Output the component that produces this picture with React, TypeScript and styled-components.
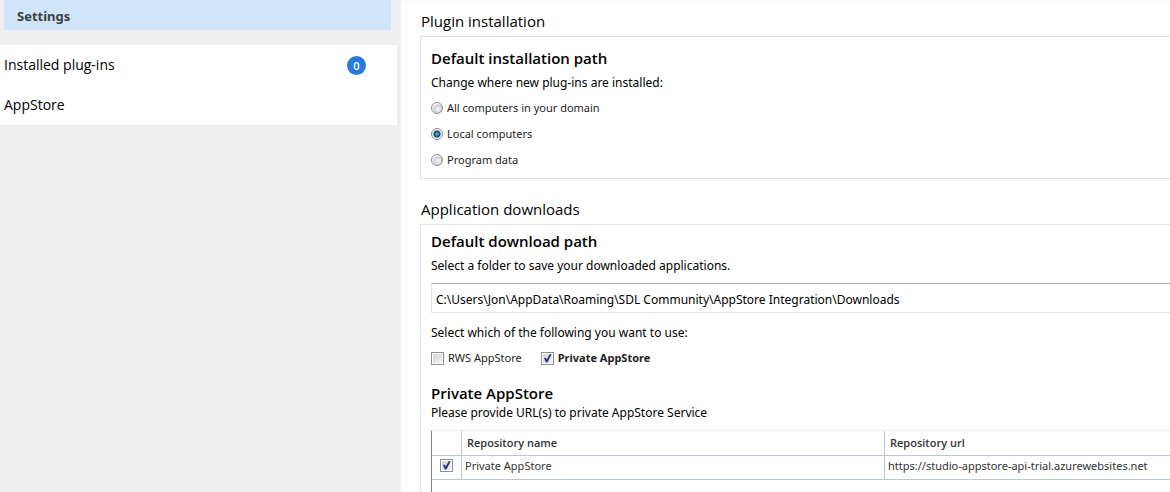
import React, { useId, useState } from "react";
import styled, { createGlobalStyle, css } from "styled-components";

const GlobalStyle = createGlobalStyle`
  * { box-sizing: border-box; }
  body {
    margin: 0;
    background: #fff;
    color: #000;
    font-family: "Noto Sans", "Open Sans", sans-serif;
    font-size: 12px;
    line-height: 18px;
  }
  h1, h2, h3, p, ul, fieldset { margin: 0; padding: 0; border: 0; }
  h2, h3, a, th { font-family: "Open Sans", "Noto Sans", sans-serif; }
  input { margin: 0; font: inherit; color: inherit; }
`;

const Page = styled.div`
  display: flex;
  min-height: 100vh;
`;

const Sidebar = styled.aside`
  flex: 0 0 400px;
  background: #efefef;
`;

const SidebarTitle = styled.h1`
  height: 30px;
  margin: 0 9px 15px 4px;
  padding: 6px 13px;
  background: #d0e5f9;
  color: #404040;
  font-size: 13px;
  font-weight: 700;
  line-height: 20px;
`;

const NavList = styled.ul`
  margin-right: 3px;
  background: #fff;
  list-style: none;
`;

const NavLink = styled.a`
  display: flex;
  align-items: center;
  justify-content: space-between;
  height: 40px;
  padding: 0 31px 0 4px;
  color: #000;
  font-size: 14px;
  text-decoration: none;
`;

const Badge = styled.span`
  width: 19px;
  height: 19px;
  border-radius: 50%;
  background: #2a7ade;
  color: #fff;
  font-size: 11px;
  font-weight: 600;
  line-height: 19px;
  text-align: center;
`;

const Content = styled.main`
  display: flex;
  flex: 1;
  flex-direction: column;
  min-width: 0;
  padding: 10px 0 0 19px;
  border-top: 1px solid #f8f8f8;
  border-left: 1px solid #f0f0f0;
`;

const SectionTitle = styled.h2`
  height: 25px;
  padding-left: 1px;
  font-size: 15px;
  font-weight: 400;
  line-height: 20px;
`;

const Panel = styled.section<{ $fill?: boolean }>`
  border: 1px solid #e5e5e5;
  border-right: 0;
  padding: 10px 0 5px 10px;
  margin-bottom: 20px;
  ${(p) =>
    p.$fill &&
    css`
      display: flex;
      flex: 1;
      flex-direction: column;
      margin-bottom: 0;
      padding: 5px 0 0 10px;
      border-bottom: 0;
    `}
`;

const PanelTitle = styled.h3<{ $tight?: boolean }>`
  margin-bottom: ${(p) => (p.$tight ? 0 : 5)}px;
  font-size: 15px;
  font-weight: 600;
  line-height: 22px;
`;

const Text = styled.p`
  font-size: 12px;
  line-height: 18px;
`;

const RadioGroup = styled.fieldset`
  display: flex;
  flex-direction: column;
  margin-top: 3px;
`;

const RadioLabel = styled.label`
  display: flex;
  align-items: center;
  gap: 4px;
  height: 26px;
  color: #1e1e1e;
  font-size: 11px;
`;

const Radio = styled.input.attrs({ type: "radio" })`
  appearance: none;
  width: 12px;
  height: 12px;
  border: 1px solid #8e8f8f;
  border-radius: 50%;
  background: radial-gradient(circle at 60% 60%, #f6f6f6 0, #dcdde0 3px, #c8cbcf 4px, #f4f4f4 5px);
  &:checked {
    background: radial-gradient(circle at 50% 50%, #58c4ee 0, #1f6f9f 2px, #15405f 3px, #e2e5e8 4px, #f4f4f4 5px);
  }
`;

const PathInput = styled.input.attrs({ type: "text" })`
  height: 30px;
  margin: 8px 0 11px;
  padding: 2px 4px 0;
  border: 1px solid #e2e3ea;
  border-top-color: #abadb3;
  border-right: 0;
  border-radius: 0;
  outline: 0;
  background: #fff;
  font-size: 12px;
`;

const Choices = styled.div`
  display: flex;
  gap: 19px;
  height: 18px;
  margin: 7px 0 15px;
`;

const CheckLabel = styled.label<{ $bold?: boolean }>`
  display: flex;
  align-items: center;
  gap: 4px;
  color: #1e1e1e;
  font-size: 11px;
  font-weight: ${(p) => (p.$bold ? 700 : 400)};
`;

const CheckFrame = styled.span`
  display: inline-grid;
  width: 13px;
  height: 13px;
  > * { grid-area: 1 / 1; }
  svg { visibility: hidden; pointer-events: none; }
  input:checked + svg { visibility: visible; }
`;

const CheckInput = styled.input.attrs({ type: "checkbox" })`
  appearance: none;
  width: 13px;
  height: 13px;
  border: 1px solid #8e8f8f;
  background: linear-gradient(135deg, #cdd0d5, #f6f6f6);
  background-clip: content-box;
  padding: 1px;
`;

const GridArea = styled.div`
  flex: 1;
  min-height: 61px;
  margin-top: 8px;
  border-left: 1px solid #828790;
  border-top: 1px solid #f0f0f0;
`;

const Grid = styled.table`
  width: 100%;
  border-collapse: separate;
  border-spacing: 0;
  table-layout: fixed;
  color: #333;
  font-size: 11px;
  line-height: 16px;
  text-align: left;

  th, td {
    padding: 0 3px;
    border-right: 1px solid #bcc9d1;
    border-bottom: 1px solid #bcc9d1;
  }
  th { height: 25px; padding: 0 5px; font-weight: 600; }
  td { height: 24px; padding-bottom: 4px; }
  th:last-child, td:last-child { border-right: 0; }
`;

const SelectCell = styled.td`
  line-height: 0;
  text-align: center;
`;

const SelectCol = styled.col`
  width: 30px;
`;

const NameCol = styled.col`
  width: 423px;
`;

type CheckProps = {
  checked: boolean;
  onChange: (checked: boolean) => void;
  label?: string;
};

function CheckBox({ checked, onChange, label }: CheckProps) {
  return (
    <CheckFrame>
      <CheckInput
        checked={checked}
        aria-label={label}
        onChange={(e) => onChange(e.target.checked)}
      />
      <svg width="13" height="13" viewBox="0 0 13 13" aria-hidden="true">
        <path d="M3 6.2 L4.8 5.6 L5.8 7.6 L8.7 2.2 L10.6 2.2 L6.4 10.6 L5 10.6 Z" fill="#2c2f86" />
      </svg>
    </CheckFrame>
  );
}

const locations = ["All computers in your domain", "Local computers", "Program data"];

export default function App() {
  const groupId = useId();
  const [location, setLocation] = useState(locations[1]);
  const [path, setPath] = useState(
    "C:\\Users\\Jon\\AppData\\Roaming\\SDL Community\\AppStore Integration\\Downloads"
  );
  const [useRws, setUseRws] = useState(false);
  const [usePrivate, setUsePrivate] = useState(true);
  const [repoEnabled, setRepoEnabled] = useState(true);

  return (
    <>
      <GlobalStyle />
      <Page>
        <Sidebar>
          <SidebarTitle>Settings</SidebarTitle>
          <nav>
            <NavList>
              <li>
                <NavLink href="#installed">
                  Installed plug-ins <Badge>0</Badge>
                </NavLink>
              </li>
              <li>
                <NavLink href="#appstore">AppStore</NavLink>
              </li>
            </NavList>
          </nav>
        </Sidebar>
        <Content>
          <SectionTitle>Plugin installation</SectionTitle>
          <Panel>
            <PanelTitle>Default installation path</PanelTitle>
            <Text id={groupId}>Change where new plug-ins are installed:</Text>
            <RadioGroup aria-labelledby={groupId}>
              {locations.map((name) => (
                <RadioLabel key={name}>
                  <Radio
                    name="location"
                    value={name}
                    checked={location === name}
                    onChange={() => setLocation(name)}
                  />
                  {name}
                </RadioLabel>
              ))}
            </RadioGroup>
          </Panel>
          <SectionTitle>Application downloads</SectionTitle>
          <Panel $fill>
            <PanelTitle>Default download path</PanelTitle>
            <Text as="label" htmlFor="download-path">
              Select a folder to save your downloaded applications.
            </Text>
            <PathInput id="download-path" value={path} onChange={(e) => setPath(e.target.value)} />
            <Text>Select which of the following you want to use:</Text>
            <Choices>
              <CheckLabel>
                <CheckBox checked={useRws} onChange={setUseRws} />
                RWS AppStore
              </CheckLabel>
              <CheckLabel $bold>
                <CheckBox checked={usePrivate} onChange={setUsePrivate} />
                Private AppStore
              </CheckLabel>
            </Choices>
            <PanelTitle $tight>Private AppStore</PanelTitle>
            <Text>Please provide URL(s) to private AppStore Service</Text>
            <GridArea>
              <Grid>
                <colgroup>
                  <SelectCol />
                  <NameCol />
                  <col />
                </colgroup>
                <thead>
                  <tr>
                    <th aria-label="Enabled" />
                    <th>Repository name</th>
                    <th>Repository url</th>
                  </tr>
                </thead>
                <tbody>
                  <tr>
                    <SelectCell>
                      <CheckBox
                        checked={repoEnabled}
                        onChange={setRepoEnabled}
                        label="Enable Private AppStore"
                      />
                    </SelectCell>
                    <td>Private AppStore</td>
                    <td>https://studio-appstore-api-trial.azurewebsites.net</td>
                  </tr>
                </tbody>
              </Grid>
            </GridArea>
          </Panel>
        </Content>
      </Page>
    </>
  );
}
